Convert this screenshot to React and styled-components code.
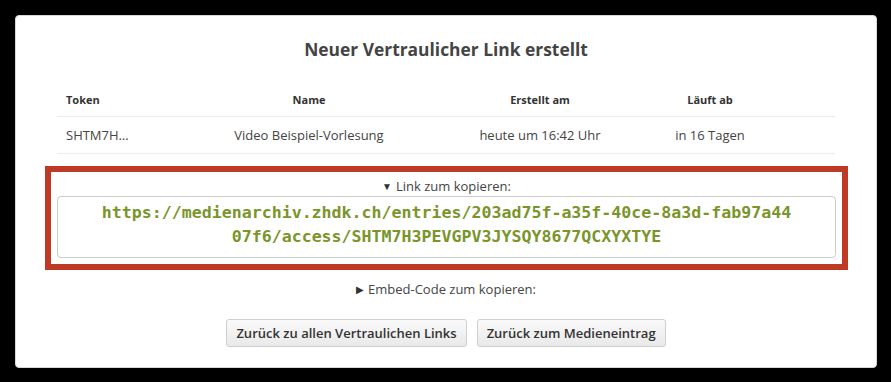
import styled, { createGlobalStyle } from "styled-components";

const GlobalStyle = createGlobalStyle`
  html, body {
    margin: 0;
    background: #000;
  }
  body {
    padding: 15px 14px 14px 15px;
    font-family: "Open Sans", "Liberation Sans", sans-serif;
  }
`;

const Panel = styled.div`
  width: 862px;
  height: 353px;
  box-sizing: border-box;
  background: #fff;
  border: 1px solid #d8d8d8;
  border-radius: 4px;
  padding: 18px 41px 0 41px;
  display: flex;
  flex-direction: column;
  align-items: stretch;
`;

const Title = styled.h1`
  margin: 0;
  font-size: 17.4px;
  line-height: 30px;
  font-weight: 700;
  color: #444;
  text-align: center;
`;

const Table = styled.div`
  margin-top: 19px;
  display: flex;
  flex-direction: column;
`;

const Row = styled.div`
  display: grid;
  grid-template-columns: 133px 238px 224px 116px 1fr;
  align-items: center;
  height: ${(p) => (p.$head ? "34px" : "37px")};
  border-bottom: 1px solid #ececec;
  box-sizing: border-box;
  font-size: ${(p) => (p.$head ? "11px" : "13px")};
  font-weight: ${(p) => (p.$head ? 700 : 400)};
  color: ${(p) => (p.$head ? "#333" : "#444")};
`;

const Cell = styled.div`
  text-align: ${(p) => (p.$left ? "left" : "center")};
  padding-left: ${(p) => (p.$left ? "9px" : "0")};
  white-space: nowrap;
`;

const Highlight = styled.div`
  margin: 12px -13px 0 -12px;
  border: 6px solid #bf3a25;
  padding: 0 6px 6px 6px;
`;

const Toggle = styled.div`
  text-align: center;
  font-size: 13px;
  line-height: 16px;
  color: #444;
  padding: ${(p) => (p.$pad ? p.$pad : "0")};
`;

const Arrow = styled.span`
  font-size: 10px;
  margin-right: 4px;
  vertical-align: 1px;
  color: #333;
`;

const LinkBox = styled.div`
  border: 1px solid #ccc;
  border-radius: 4px;
  height: 62px;
  box-sizing: border-box;
  padding: 4px 42px 0 42px;
  margin-top: 2px;
  font-family: "DejaVu Sans Mono", "Liberation Mono", monospace;
  font-weight: 700;
  font-size: 16.6px;
  line-height: 24px;
  color: #7a952c;
  text-align: center;
  word-break: break-all;
`;

const Buttons = styled.div`
  display: flex;
  justify-content: center;
  gap: 10px;
  margin-top: 22px;
`;

const Button = styled.button`
  height: 28px;
  padding: 0 9px;
  border: 1px solid #cfcfcf;
  border-radius: 3px;
  background: linear-gradient(#fafafa, #e9e9e9);
  font-family: "Open Sans", "Liberation Sans", sans-serif;
  font-size: 13px;
  font-weight: 600;
  color: #333;
  cursor: pointer;
`;

const App = () => {
  return (
    <>
      <GlobalStyle />
      <Panel>
        <Title>Neuer Vertraulicher Link erstellt</Title>
        <Table>
          <Row $head>
            <Cell $left>Token</Cell>
            <Cell>Name</Cell>
            <Cell>Erstellt am</Cell>
            <Cell>Läuft ab</Cell>
            <Cell />
          </Row>
          <Row>
            <Cell $left>SHTM7H…</Cell>
            <Cell>Video Beispiel-Vorlesung</Cell>
            <Cell>heute um 16:42 Uhr</Cell>
            <Cell>in 16 Tagen</Cell>
            <Cell />
          </Row>
        </Table>
        <Highlight>
          <Toggle $pad="6px 0 0 0">
            <Arrow>▼</Arrow>Link zum kopieren:
          </Toggle>
          <LinkBox>
            https://medienarchiv.zhdk.ch/entries/203ad75f-a35f-40ce-8a3d-fab97a4407f6/access/SHTM7H3PEVGPV3JYSQY8677QCXYXTYE
          </LinkBox>
        </Highlight>
        <Toggle $pad="11px 0 0 0">
          <Arrow>▶</Arrow>Embed-Code zum kopieren:
        </Toggle>
        <Buttons>
          <Button>Zurück zu allen Vertraulichen Links</Button>
          <Button>Zurück zum Medieneintrag</Button>
        </Buttons>
      </Panel>
    </>
  );
};

export default App;
